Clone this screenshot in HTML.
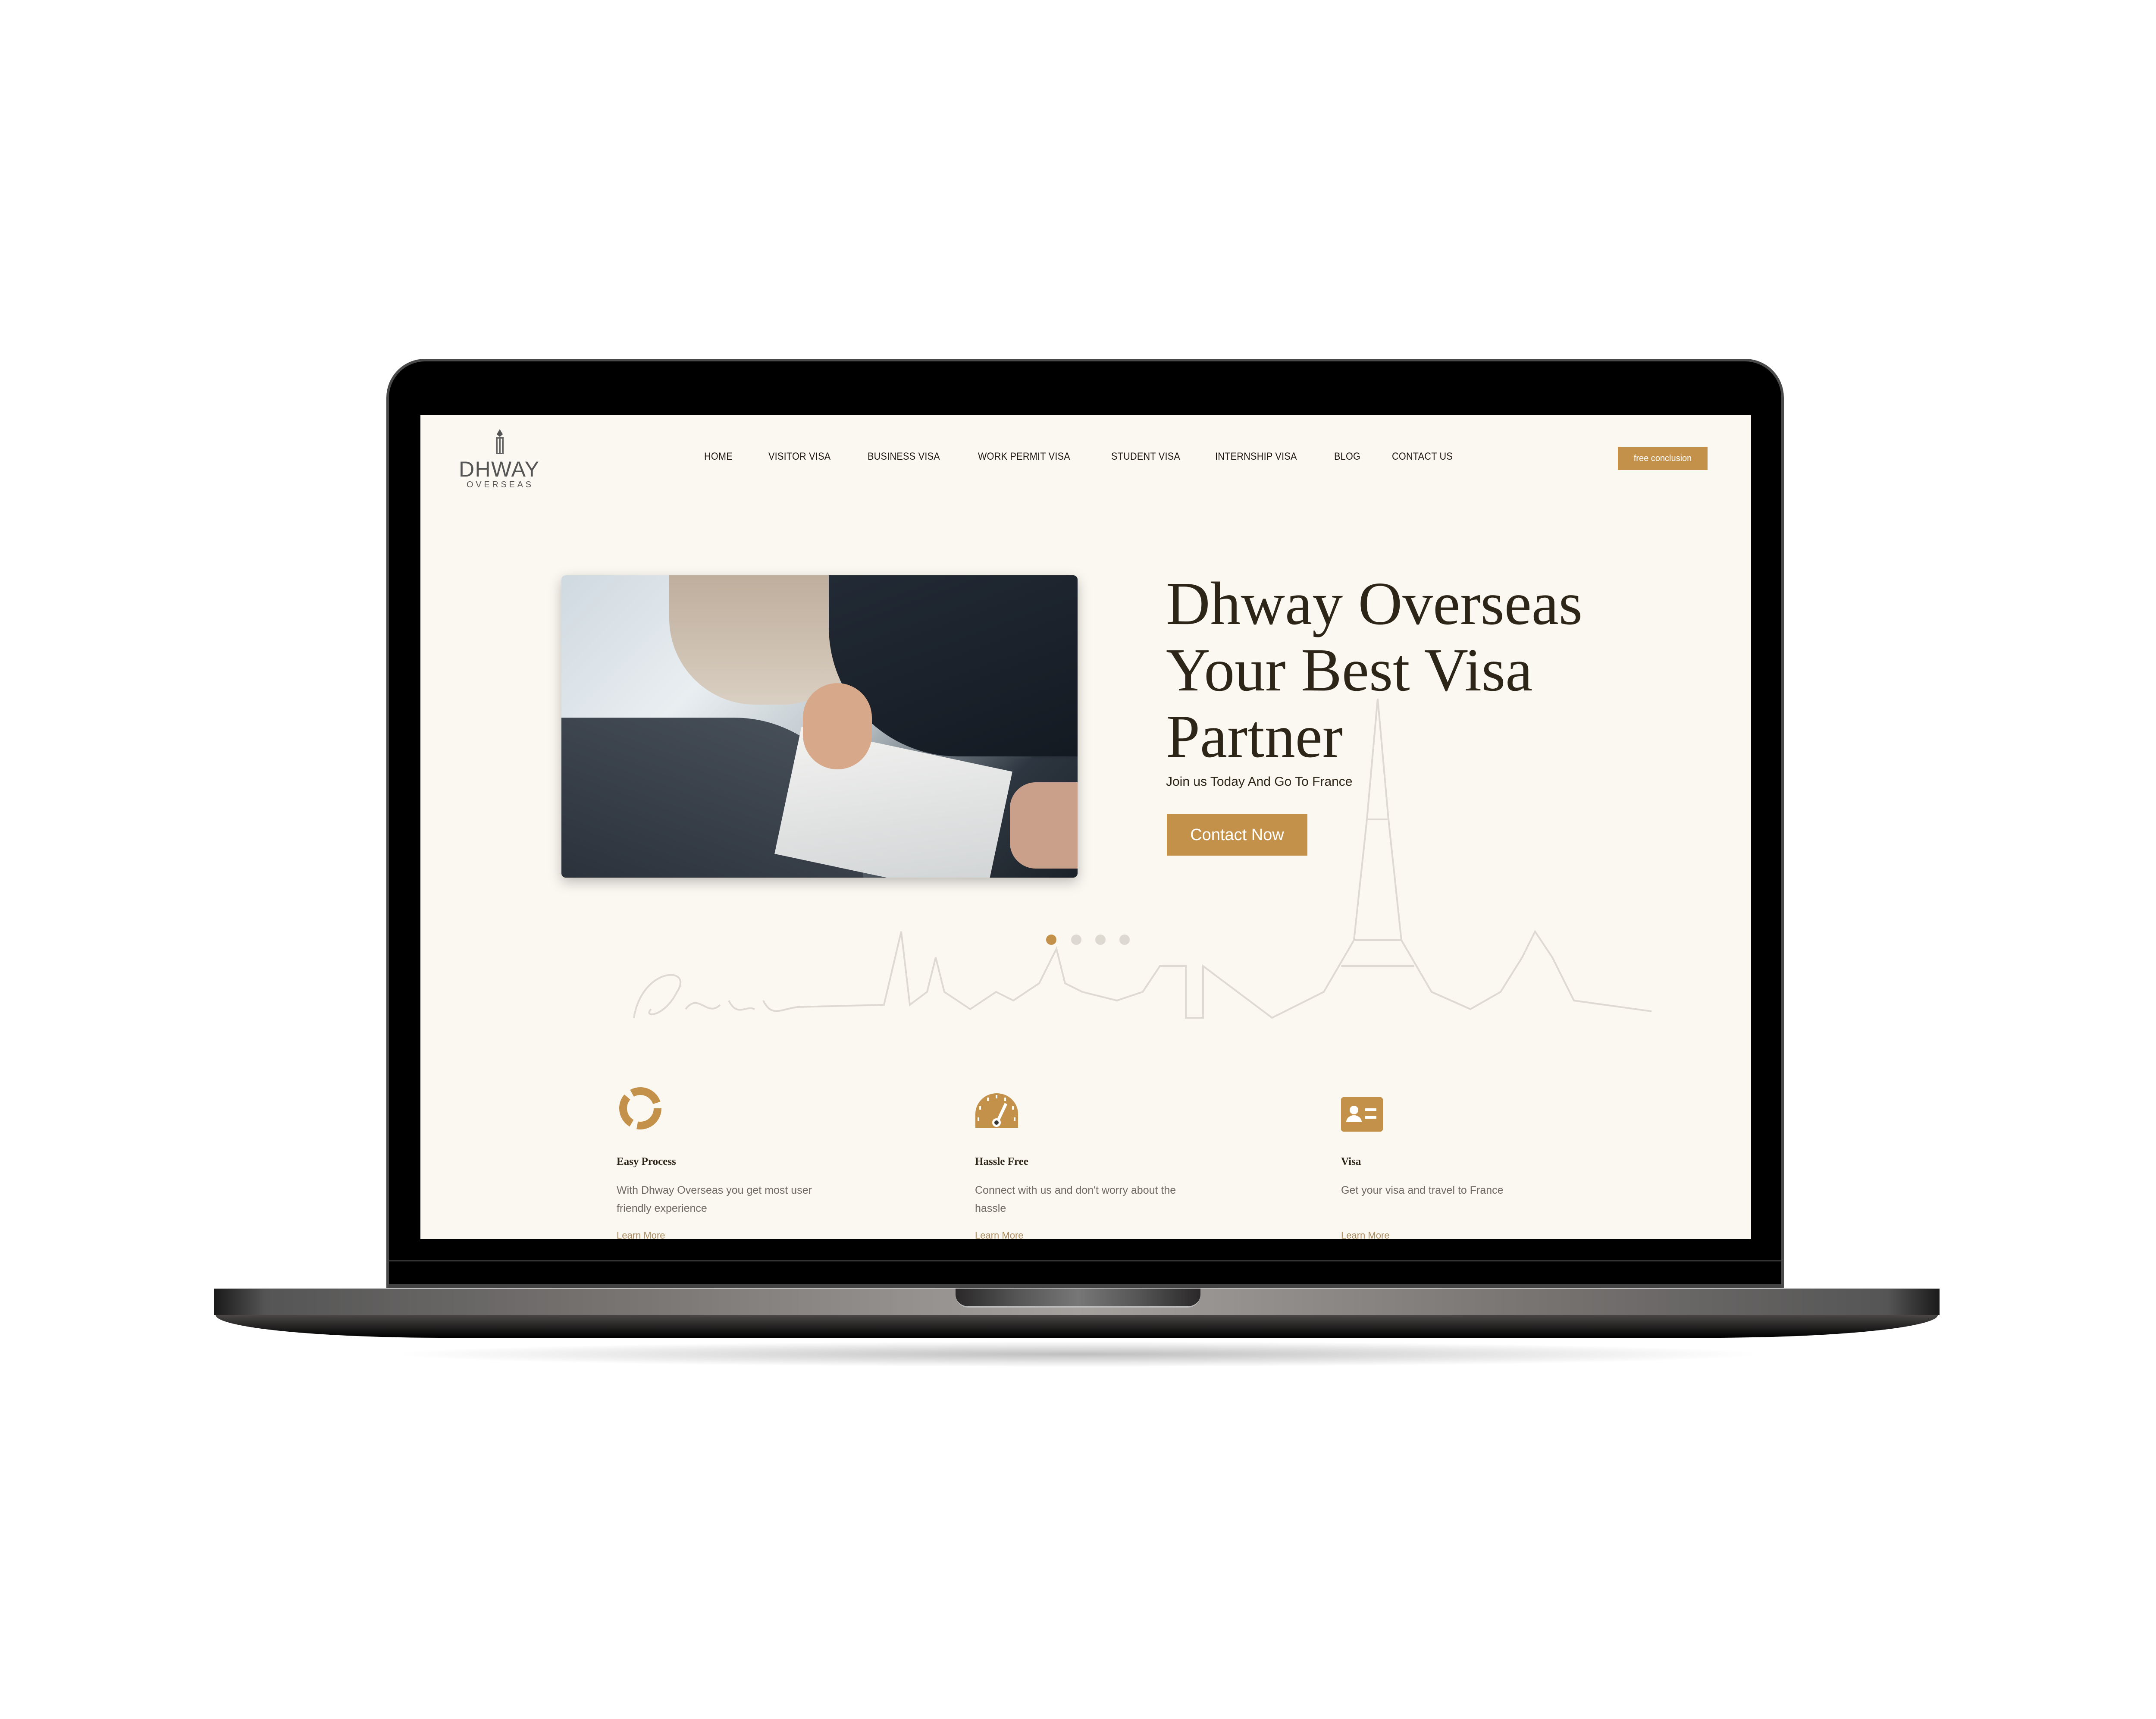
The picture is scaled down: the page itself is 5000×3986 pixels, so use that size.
<!DOCTYPE html>
<html><head><meta charset="utf-8"><style>
*{margin:0;padding:0;box-sizing:border-box}
body{width:5000px;height:3986px;background:#fff;position:relative;overflow:hidden;font-family:"Liberation Sans",sans-serif}
.abs{position:absolute}
#lid{left:896px;top:832px;width:3241px;height:2155px;background:#000;border-radius:90px 90px 0 0;border:6px solid #4a4a4a;border-bottom:none}
#screen{left:975px;top:962px;width:3086px;height:1911px;background:#fbf7f1;overflow:hidden}
.nav{top:1045px;font-size:24px;color:#1f1a10;letter-spacing:.3px;font-weight:400;transform:scaleX(.9);transform-origin:left}
.btn{background:#c4914a;color:#fff}
.h1{position:absolute;left:2704px;top:1322px;font-family:"Liberation Serif",serif;font-weight:400;font-size:142px;line-height:154px;color:#2d2618;z-index:5;white-space:nowrap}
.ft{font-family:"Liberation Serif",serif;font-size:25px;font-weight:700;color:#2d2618}
.fd{font-size:25px;color:#6f6a62;line-height:42px}
.lm{font-size:22px;color:#a88a5e}
</style></head><body>
<div id="lid" class="abs"></div>
<div class="abs" style="left:902px;top:2922px;width:3229px;height:3px;background:#333"></div>
<div class="abs" style="left:902px;top:2978px;width:3229px;height:10px;background:#444"></div>
<div id="screen" class="abs"></div>
<svg class="abs" style="left:1064px;top:993px" width="190" height="140" viewBox="0 0 190 140">
<path d="M95 2 L102 14 L95 20 L88 14Z" fill="#555"/>
<rect x="86" y="20" width="18" height="40" fill="#666"/>
<rect x="90" y="24" width="3" height="34" fill="#fbf7f1"/><rect x="97" y="24" width="3" height="34" fill="#fbf7f1"/>
<text x="0" y="112" font-family="Liberation Sans" font-size="50" fill="#555" textLength="186">DHWAY</text>
<text x="18" y="137" font-family="Liberation Sans" font-size="20" fill="#555" textLength="150">OVERSEAS</text>
</svg>
<div class="abs nav" style="left:1633px">HOME</div>
<div class="abs nav" style="left:1782px">VISITOR VISA</div>
<div class="abs nav" style="left:2012px">BUSINESS VISA</div>
<div class="abs nav" style="left:2268px">WORK PERMIT VISA</div>
<div class="abs nav" style="left:2577px">STUDENT VISA</div>
<div class="abs nav" style="left:2818px">INTERNSHIP VISA</div>
<div class="abs nav" style="left:3094px">BLOG</div>
<div class="abs nav" style="left:3228px">CONTACT US</div>
<div class="abs btn" style="left:3752px;top:1036px;width:208px;height:54px;font-size:20px;line-height:54px;text-align:center">free conclusion</div>
<div class="abs" style="left:1302px;top:1334px;width:1197px;height:701px;border-radius:10px;overflow:hidden;box-shadow:0 10px 30px rgba(0,0,0,.25);background:linear-gradient(135deg,#cfd9e0 0%,#e9eef1 30%,#b9c3c8 55%,#2d3640 80%,#1b2128 100%)">
<div class="abs" style="left:250px;top:0;width:460px;height:300px;background:linear-gradient(180deg,#bfae9c,#d9cfc2);border-radius:0 0 200px 200px"></div>
<div class="abs" style="left:620px;top:0;width:577px;height:420px;background:linear-gradient(160deg,#222a35,#141a22);border-radius:0 0 0 300px"></div>
<div class="abs" style="left:0;top:330px;width:700px;height:371px;background:linear-gradient(20deg,#2b323b,#4a525c);border-radius:0 300px 0 0"></div>
<div class="abs" style="left:520px;top:400px;width:500px;height:301px;background:linear-gradient(160deg,#f2f2f0,#cfd2d4);transform:rotate(12deg)"></div>
<div class="abs" style="left:560px;top:250px;width:160px;height:200px;background:#d7a98a;border-radius:80px"></div>
<div class="abs" style="left:1040px;top:480px;width:157px;height:200px;background:#caa08a;border-radius:60px 0 0 60px"></div>
</div>
<svg class="abs" style="left:1450px;top:1600px" width="2400" height="800" viewBox="0 0 2400 800">
<path fill="none" stroke="#dedad2" stroke-width="4" d="M20 760 C40 640 160 640 120 700 C90 760 40 760 60 740 M140 740 C170 700 190 760 220 730 M240 720 C260 760 280 730 300 740 M320 720 C340 760 360 740 400 735 L600 730 L640 560 L660 730 L700 700 L720 620 L740 700 L800 740 L860 700 L900 720 L960 680 L1000 600 L1020 680 L1060 700 L1140 720 L1200 700 L1240 640 L1300 640 L1300 760 L1340 760 L1340 640 L1420 700 L1500 760 L1620 700 L1690 580 L1720 300 L1745 20 L1770 300 L1800 580 L1870 700 L1960 740 L2030 700 L2080 620 L2110 560 L2150 620 L2200 720 L2380 745"/>
<path fill="none" stroke="#dedad2" stroke-width="4" d="M1692 580 L1800 580 M1660 640 L1830 640 M1722 300 L1768 300"/>
</svg>
<div class="h1">Dhway Overseas<br>Your Best Visa<br>Partner</div>
<div class="abs" style="left:2704px;top:1796px;font-size:30px;color:#2d2618;z-index:5">Join us Today And Go To France</div>
<div class="abs btn" style="left:2706px;top:1888px;width:326px;height:96px;font-size:38px;line-height:96px;text-align:center;z-index:5">Contact Now</div>
<div class="abs" style="left:2426px;top:2167px;width:24px;height:24px;border-radius:50%;background:#c4914a"></div>
<div class="abs" style="left:2484px;top:2167px;width:24px;height:24px;border-radius:50%;background:#ddd8d0"></div>
<div class="abs" style="left:2540px;top:2167px;width:24px;height:24px;border-radius:50%;background:#ddd8d0"></div>
<div class="abs" style="left:2596px;top:2167px;width:24px;height:24px;border-radius:50%;background:#ddd8d0"></div>
<svg class="abs" style="left:1430px;top:2518px" width="110" height="105" viewBox="0 0 110 105"><circle cx="55" cy="52" r="40" stroke="#c4914a" stroke-width="18" fill="none" stroke-dasharray="70 14"/></svg>
<svg class="abs" style="left:2261px;top:2533px" width="101" height="86" viewBox="0 0 101 86"><path d="M1 82 L1 50 A49.5 48 0 0 1 100 50 L100 82 Z" fill="#c4914a"/><g stroke="#fff" stroke-width="4"><path d="M30 12 L30 20 M50 6 L50 14 M70 12 L70 20 M12 32 L12 40 M88 32 L88 40 M8 58 L8 66 M92 58 L92 66"/></g><path d="M52 68 L72 26" stroke="#fff" stroke-width="7"/><circle cx="50" cy="70" r="10" fill="#fff"/><circle cx="50" cy="70" r="5" fill="#333"/></svg>
<svg class="abs" style="left:3110px;top:2544px" width="97" height="80" viewBox="0 0 97 80"><rect width="97" height="80" rx="6" fill="#c4914a"/><circle cx="30" cy="30" r="10" fill="#fff"/><path d="M12 58 A18 16 0 0 1 48 58Z" fill="#fff"/><rect x="56" y="26" width="26" height="6" fill="#fff"/><rect x="56" y="44" width="26" height="6" fill="#fff"/></svg>
<div class="abs ft" style="left:1430px;top:2680px">Easy Process</div>
<div class="abs ft" style="left:2261px;top:2680px">Hassle Free</div>
<div class="abs ft" style="left:3110px;top:2680px">Visa</div>
<div class="abs fd" style="left:1430px;top:2739px;width:520px">With Dhway Overseas you get most user friendly experience</div>
<div class="abs fd" style="left:2261px;top:2739px;width:520px">Connect with us and don't worry about the hassle</div>
<div class="abs fd" style="left:3110px;top:2739px;width:520px">Get your visa and travel to France</div>
<div class="abs" style="left:975px;top:2850px;width:3086px;height:23px;overflow:hidden">
<div class="abs lm" style="left:455px;top:2px">Learn More</div>
<div class="abs lm" style="left:1286px;top:2px">Learn More</div>
<div class="abs lm" style="left:2135px;top:2px">Learn More</div>
</div>
<div class="abs" style="left:496px;top:2986px;width:4002px;height:63px;background:linear-gradient(90deg,#1a1a1a 0%,#555 3%,#7a7674 25%,#a5a19e 50%,#7a7674 75%,#555 97%,#1a1a1a 100%);border-top:3px solid #bbb"></div>
<div class="abs" style="left:500px;top:3049px;width:3994px;height:53px;background:linear-gradient(180deg,#4a4746,#000);border-radius:0 0 600px 600px/0 0 60px 60px"></div>
<div class="abs" style="left:2216px;top:2988px;width:568px;height:44px;background:linear-gradient(90deg,#2a2828,#555,#777,#555,#2a2828);border-radius:0 0 30px 30px;border-bottom:3px solid #bbb"></div>
<div class="abs" style="left:900px;top:3110px;width:3200px;height:60px;border-radius:50%;background:radial-gradient(ellipse at center,rgba(0,0,0,.25),rgba(0,0,0,0) 70%)"></div>
</body></html>
